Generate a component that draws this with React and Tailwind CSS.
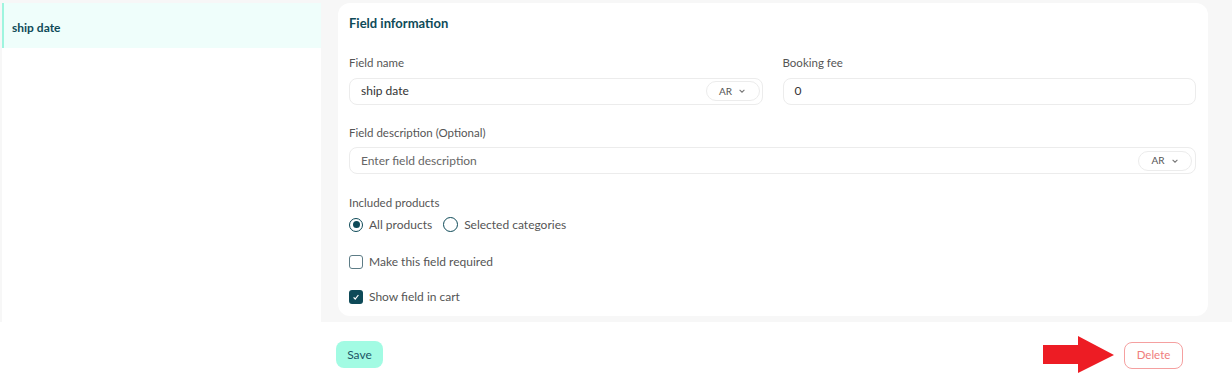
import React from 'react'

const font = { fontFamily: 'Lato, "Noto Sans", sans-serif' }

function LangPill() {
  return (
    <div className="flex items-center gap-1.5 h-[20px] w-[54px] justify-center rounded-full border border-[#ececec] text-[10px] text-[#555]">
      AR
      <svg width="8" height="8" viewBox="0 0 10 10" fill="none" stroke="#777" strokeWidth="1.3"><path d="M2 3.5l3 3 3-3"/></svg>
    </div>
  )
}

function Label({ children }) {
  return <p className="text-[11.5px] text-[#555] leading-none mb-[9px]">{children}</p>
}

export default function App() {
  return (
    <div className="w-full bg-white" style={font}>
      <div className="flex bg-[#f7f7f7] pt-[3px] h-[322px]">
        {/* Sidebar */}
        <div className="ml-[2px] w-[319px] bg-white">
          <div className="h-[45px] flex items-center border-l-2 border-[#9ff5df] bg-[#effefb] pl-[8px] pt-[5px]">
            <span className="text-[12px] font-bold text-[#0e4a58]">ship date</span>
          </div>
        </div>

        {/* Card */}
        <div className="ml-[17px] w-[870px] h-[313px] rounded-xl bg-white pl-[11px] pr-[12px] pt-[14px]">
          <h2 className="text-[13px] font-bold text-[#0e4a58] leading-none">Field information</h2>

          <div className="mt-[27px] grid grid-cols-2 gap-x-[20px]">
            <div>
              <Label>Field name</Label>
              <div className="h-[27px] rounded-lg border border-[#ececec] flex items-center justify-between pl-[11px] pr-[2px]">
                <span className="text-[12px] text-[#333]">ship date</span>
                <LangPill />
              </div>
            </div>
            <div>
              <Label>Booking fee</Label>
              <div className="h-[27px] rounded-lg border border-[#ececec] flex items-center pl-[11px]">
                <span className="text-[12px] text-[#333]">0</span>
              </div>
            </div>
          </div>

          <div className="mt-[22px]">
            <Label>Field description (Optional)</Label>
            <div className="h-[27px] rounded-lg border border-[#ececec] flex items-center justify-between pl-[11px] pr-[3px]">
              <span className="text-[12px] text-[#666]">Enter field description</span>
              <LangPill />
            </div>
          </div>

          <div className="mt-[23px]">
            <p className="text-[11.5px] text-[#555] leading-none">Included products</p>
            <div className="mt-[7px] flex items-center text-[12px] text-[#555]">
              <span className="w-[14px] h-[14px] rounded-full border-[1.5px] border-[#0e4a58] flex items-center justify-center">
                <span className="w-[7px] h-[7px] rounded-full bg-[#0e4a58]" />
              </span>
              <span className="ml-[6px]">All products</span>
              <span className="ml-[11px] w-[15px] h-[15px] rounded-full border-[1.5px] border-[#0e4a58]" />
              <span className="ml-[6px]">Selected categories</span>
            </div>
          </div>

          <div className="mt-[19px] flex items-center text-[12px] text-[#555]">
            <span className="w-[14px] h-[14px] rounded-[3px] border-[1.5px] border-[#5d7c86]" />
            <span className="ml-[6px]">Make this field required</span>
          </div>

          <div className="mt-[17px] flex items-center text-[12px] text-[#555]">
            <span className="w-[14px] h-[14px] rounded-[3px] bg-[#0e4a58] flex items-center justify-center">
              <svg width="8" height="8" viewBox="0 0 10 10" fill="none" stroke="white" strokeWidth="1.5"><path d="M2 5.5l2 2 4-5"/></svg>
            </span>
            <span className="ml-[6px]">Show field in cart</span>
          </div>
        </div>
      </div>

      {/* Footer */}
      <div className="h-[60px] flex items-start justify-between pl-[336px] pr-[49px] pt-[14px]">
        <button className="mt-[5px] h-[27px] w-[47px] rounded-lg bg-[#a2fbe3] text-[12px] text-[#1d5566]">Save</button>
        <div className="flex items-center">
          <svg width="72" height="38" viewBox="0 0 72 38" className="mr-[9px]">
            <polygon points="0,9 35,9 35,0 71,19 35,37 35,28 0,28" fill="#ed1c24" />
          </svg>
          <button className="h-[27px] w-[59px] rounded-lg border border-[#f5a0a0] text-[11.5px] text-[#f07c7c]">Delete</button>
        </div>
      </div>
    </div>
  )
}
